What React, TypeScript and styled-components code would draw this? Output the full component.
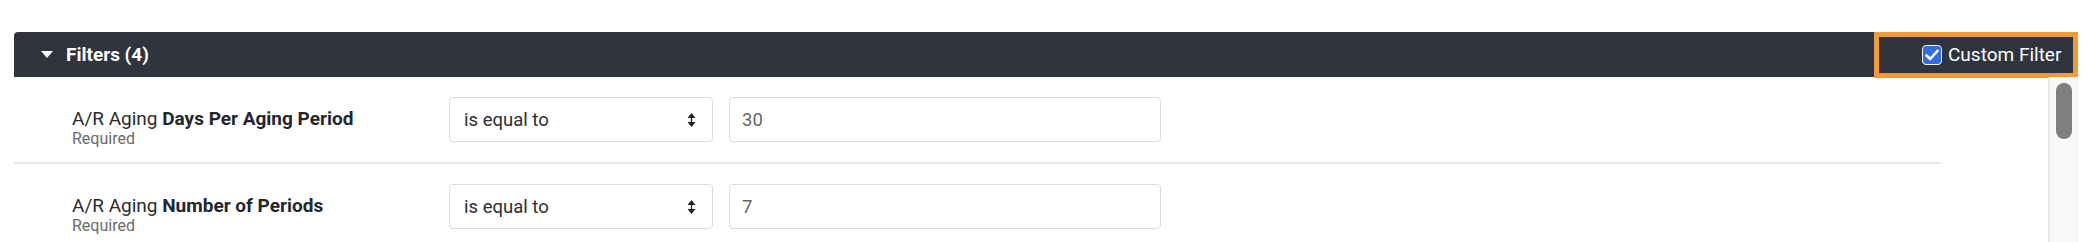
import React from 'react';
import styled, {createGlobalStyle} from "styled-components";

interface FilterRowProps {
    prefix: string,
    name: string,
    operator: string,
    value: string
}

const filters: FilterRowProps[] = [
    {prefix: 'A/R Aging', name: 'Days Per Aging Period', operator: 'is equal to', value: '30'},
    {prefix: 'A/R Aging', name: 'Number of Periods', operator: 'is equal to', value: '7'},
]

const FilterRow: React.FC<FilterRowProps> = ({prefix, name, operator, value}) => {
    return (
        <StyledRow>
            <div className='row--label'>
                <div className='row--title'>
                    {prefix} <b>{name}</b>
                </div>
                <div className='row--hint'>Required</div>
            </div>
            <StyledSelect>
                <span>{operator}</span>
                <svg width="9" height="14" viewBox="0 0 9 14">
                    <path d="M4.5 0 L8.5 5 L5.2 5 L5.2 9 L8.5 9 L4.5 14 L0.5 9 L3.8 9 L3.8 5 L0.5 5 Z" fill="#222"/>
                </svg>
            </StyledSelect>
            <StyledInput type="text" defaultValue={value} readOnly/>
        </StyledRow>
    )
}

export default function App() {
    return (
        <>
            <GlobalStyle/>
            <StyledPage>
                <StyledHeader>
                    <div className='header--title'>
                        <svg width="12" height="7" viewBox="0 0 12 7">
                            <path d="M0 0 L12 0 L6 7 Z" fill="#fff"/>
                        </svg>
                        Filters (4)
                    </div>
                    <StyledCustom>
                        <span className='custom--check'>
                            <svg width="14" height="12" viewBox="0 0 14 12">
                                <path d="M1.5 6.5 L5.2 10 L12.5 1.8" stroke="#fff" strokeWidth="2.6" fill="none"
                                      strokeLinecap="round" strokeLinejoin="round"/>
                            </svg>
                        </span>
                        Custom Filter
                    </StyledCustom>
                </StyledHeader>
                <StyledBody>
                    <div className='body--list'>
                        {filters.map((f) => <FilterRow key={f.name} {...f}/>)}
                    </div>
                    <StyledScroll>
                        <div className='scroll--thumb'/>
                    </StyledScroll>
                </StyledBody>
            </StyledPage>
        </>
    )
}

const GlobalStyle = createGlobalStyle`
  body {
    margin: 0;
    background: #fff;
    font-family: Roboto, "Liberation Sans", sans-serif;
  }
`

const StyledPage = styled.div`
  display: flex;
  flex-direction: column;
  padding: 32px 16px 0 14px;
  height: 242px;
  box-sizing: border-box;
  overflow: hidden;
`

const StyledHeader = styled.div`
  display: flex;
  align-items: stretch;
  justify-content: space-between;
  height: 45px;
  background: #30343e;
  border-radius: 4px 4px 0 0;

  .header--title {
    display: flex;
    align-items: center;
    column-gap: 13px;
    padding-left: 27px;
    color: #fff;
    font-size: 19px;
    font-weight: 700;
  }
`

const StyledCustom = styled.div`
  display: flex;
  align-items: center;
  column-gap: 6px;
  box-sizing: border-box;
  width: 204px;
  height: 46px;
  margin-top: -0.5px;
  padding: 0 11px 0 43px;
  border: 5px solid #f39a38;
  color: #fff;
  font-size: 19px;

  .custom--check {
    display: flex;
    align-items: center;
    justify-content: center;
    box-sizing: border-box;
    width: 20px;
    height: 20px;
    background: #2d6fe0;
    border: 1.5px solid #f4f6fb;
    border-radius: 4px;
  }
`

const StyledBody = styled.div`
  display: flex;
  flex: 1;
  min-height: 0;

  .body--list {
    flex: 1;
    padding-right: 107px;
  }
`

const StyledRow = styled.div`
  display: flex;
  align-items: flex-start;
  column-gap: 16px;
  padding: 20px 0 20px 58px;
  border-bottom: 2px solid #e8e8e8;

  .row--label {
    box-sizing: border-box;
    width: 361px;
    height: 45px;
    padding-top: 11px;
  }

  .row--title {
    font-size: 19px;
    line-height: 22px;
    color: #2b2b2b;

    b {
      font-weight: 700;
      color: #23262d;
    }
  }

  .row--hint {
    font-size: 16px;
    line-height: 18px;
    color: #6b6b6b;
  }
`

const StyledSelect = styled.div`
  display: flex;
  align-items: center;
  justify-content: space-between;
  box-sizing: border-box;
  width: 264px;
  height: 45px;
  padding: 0 16px 0 14px;
  border: 1px solid #dcdcdc;
  border-radius: 4px;
  font-size: 18.5px;
  color: #2e2e2e;
`

const StyledInput = styled.input`
  box-sizing: border-box;
  width: 432px;
  height: 45px;
  margin: 0;
  padding: 0 12px;
  border: 1px solid #dcdcdc;
  border-radius: 4px;
  font-family: Roboto, "Liberation Sans", sans-serif;
  font-size: 18.5px;
  color: #666;
  outline: none;
`

const StyledScroll = styled.div`
  box-sizing: border-box;
  width: 30px;
  padding: 6px 6px 0 6px;
  background: #f8f8f8;
  border-left: 2px solid #e8e8e8;
  border-right: 1px solid #ececec;

  .scroll--thumb {
    width: 16px;
    height: 56px;
    border-radius: 8px;
    background: #7f7f7f;
  }
`
